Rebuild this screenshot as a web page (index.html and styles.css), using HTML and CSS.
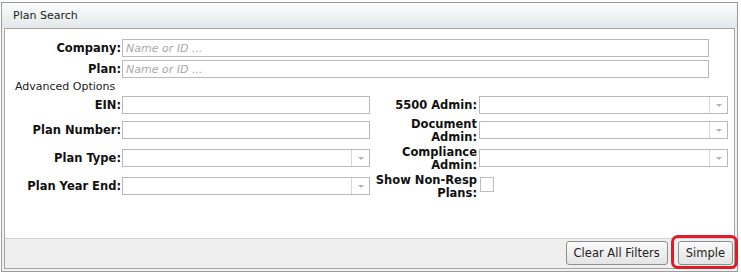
FILE: index.html
```html
<!DOCTYPE html>
<html lang="en">
<head>
    <meta charset="UTF-8">
    <title>Plan Search</title>
    <link rel="stylesheet" href="styles.css">
</head>
<body>
    <div class="panel">
        <div class="panel-head">Plan Search</div>
        <div class="panel-body">
            <div class="search-form">
                <label class="lbl">Company:</label>
                <input class="txt wide" type="text" placeholder="Name or ID ...">

                <label class="lbl">Plan:</label>
                <input class="txt wide" type="text" placeholder="Name or ID ...">

                <div class="section-title">Advanced Options</div>

                <label class="lbl">EIN:</label>
                <input class="txt" type="text">
                <label class="lbl lbl-right">5500 Admin:</label>
                <div class="combo combo-right"><span class="combo-btn"></span></div>

                <label class="lbl">Plan Number:</label>
                <input class="txt" type="text">
                <label class="lbl lbl-right two-line">Document<br>Admin:</label>
                <div class="combo combo-right"><span class="combo-btn"></span></div>

                <label class="lbl">Plan Type:</label>
                <div class="combo"><span class="combo-btn"></span></div>
                <label class="lbl lbl-right two-line">Compliance<br>Admin:</label>
                <div class="combo combo-right"><span class="combo-btn"></span></div>

                <label class="lbl">Plan Year End:</label>
                <div class="combo"><span class="combo-btn"></span></div>
                <label class="lbl lbl-right two-line">Show Non-Resp<br>Plans:</label>
                <span class="check"></span>
            </div>
            <div class="panel-foot">
                <button class="btn">Clear All Filters</button>
                <button class="btn marked">Simple</button>
            </div>
        </div>
    </div>
</body>
</html>
```

FILE: styles.css
```css
body {
    margin: 0;
    background-color: white;
    font-family: "DejaVu Sans", Verdana, sans-serif;
    font-size: 11px;
    color: black;
}
.panel {
    width: 735px;
    height: 268px;
    margin: 2px 0 0 1px;
    border: 1px solid #9c9c9c;
    background-color: #f2f2f2;
    display: flex;
    flex-direction: column;
}
.panel-head {
    height: 25px;
    line-height: 25px;
    padding-left: 11px;
    background: linear-gradient(#fbfcfc, #e2e8ea);
    color: #222;
}
.panel-body {
    flex: 1;
    margin: 0 2px 2px 2px;
    border: 1px solid #a4a4a4;
    background-color: white;
    display: flex;
    flex-direction: column;
}
.search-form {
    flex: 1;
    display: grid;
    grid-template-columns: 117px 248px 109px 249px;
    grid-template-rows: 21px 18px 18px 25px 28px 28px auto;
    padding-top: 10px;
    align-items: start;
}
.lbl {
    font-size: 11.5px;
    font-weight: bold;
    color: #111;
    text-align: right;
    padding-right: 1px;
    height: 18px;
    line-height: 18px;
}
.lbl-right {
    padding-right: 2px;
}
.two-line {
    line-height: 13px;
    height: 26px;
    margin-top: -3px;
}
.txt {
    box-sizing: border-box;
    height: 18px;
    width: 248px;
    margin: 0;
    padding: 0 3px;
    border: 1px solid #b9b9b9;
    font-family: "DejaVu Sans", Verdana, sans-serif;
    font-size: 11px;
    outline: none;
}
.txt::placeholder {
    color: #a8a8a8;
    font-style: italic;
}
.wide {
    grid-column: 2 / 5;
    width: 587px;
}
.section-title {
    grid-column: 1 / 5;
    padding-left: 10px;
    line-height: 18px;
    color: #222;
}
.combo {
    box-sizing: border-box;
    height: 18px;
    width: 248px;
    border: 1px solid #b9b9b9;
    background-color: white;
    display: flex;
    justify-content: flex-end;
}
.combo-right {
    width: 249px;
}
.combo-btn {
    width: 17px;
    border-left: 1px solid #d6d6d6;
    position: relative;
}
.combo-btn::after {
    content: "";
    position: absolute;
    left: 6px;
    top: 7px;
    border-left: 3px solid transparent;
    border-right: 3px solid transparent;
    border-top: 3px solid #b4b4b4;
}
.check {
    box-sizing: border-box;
    width: 14px;
    height: 15px;
    border: 1px solid #bdbdbd;
    background-color: white;
    margin-left: 1px;
}
.panel-foot {
    height: 27px;
    border-top: 1px solid #d0d0d0;
    background-color: #efefef;
    display: flex;
    justify-content: flex-end;
    align-items: flex-start;
    gap: 10px;
    padding: 2px 1px 0 0;
}
.btn {
    height: 24px;
    padding: 0 7px;
    border: 1px solid #8e8e8e;
    border-radius: 3px;
    background: linear-gradient(#fafafa, #e4e4e4);
    font-family: "DejaVu Sans", Verdana, sans-serif;
    font-size: 11.5px;
    color: #222;
}
.marked {
    position: relative;
}
.marked::after {
    content: "";
    position: absolute;
    left: -8px;
    right: -6px;
    top: -7px;
    bottom: -5px;
    border: 3px solid #e11b26;
    border-radius: 7px;
}
```
